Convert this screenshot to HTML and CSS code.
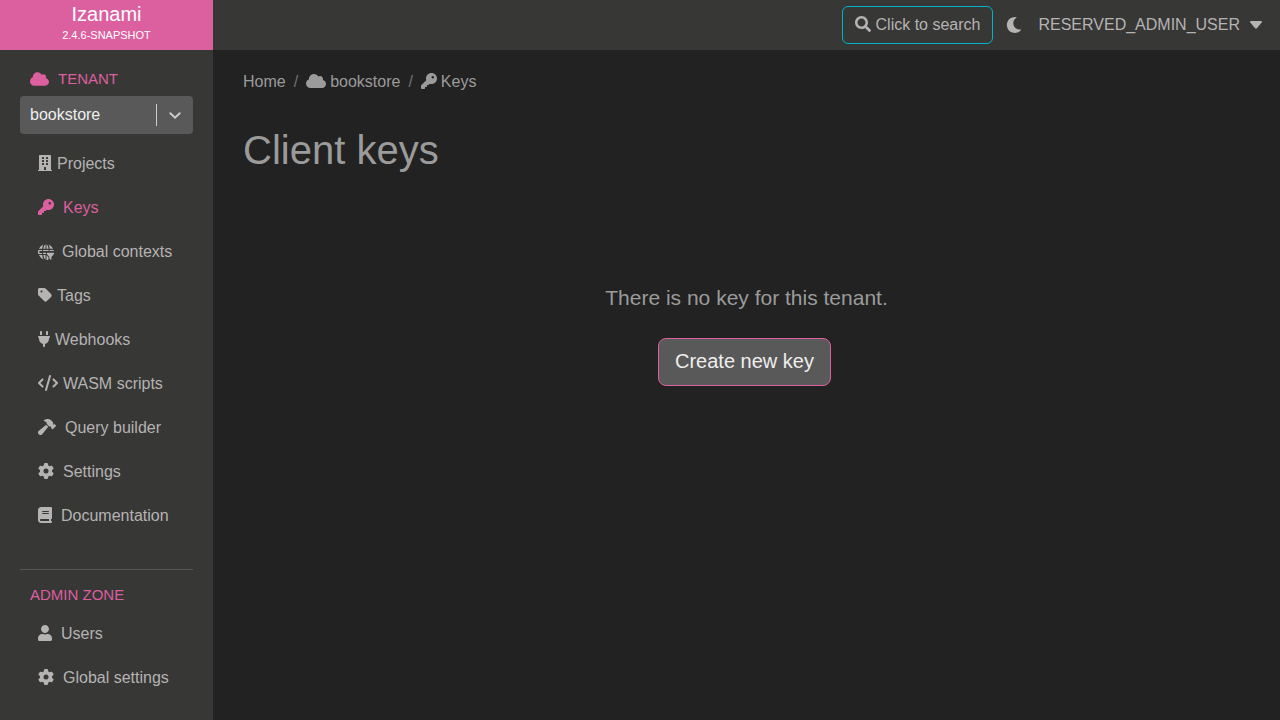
FILE: index.html
```html
<!DOCTYPE html>
<html lang="en">
<head>
<meta charset="utf-8">
<title>Izanami - Client keys</title>
<link rel="stylesheet" href="styles.css">
</head>
<body>
<svg class="sprite" aria-hidden="true">
  <symbol id="cloud" viewBox="0 0 640 512"><path d="M537.6 226.6c4.100-10.700 6.400-22.400 6.400-34.600 0-53-43-96-96-96-19.700 0-38.100 6-53.300 16.200C367 64.200 315.300 32 256 32c-88.400 0-160 71.600-160 160 0 2.700.1 5.400.2 8.100C40.200 219.800 0 273.200 0 336c0 79.500 64.500 144 144 144h368c70.700 0 128-57.300 128-128 0-61.900-44-113.600-102.400-125.400z"/></symbol>
  <symbol id="key" viewBox="0 0 512 512"><path d="M336 352c97.200 0 176-78.800 176-176S433.200 0 336 0S160 78.800 160 176c0 18.700 2.900 36.800 8.300 53.700L7 391c-4.500 4.500-7 10.600-7 17l0 80c0 13.300 10.700 24 24 24l80 0c13.300 0 24-10.700 24-24l0-40 40 0c13.300 0 24-10.700 24-24l0-40 40 0c6.400 0 12.500-2.500 17-7l33.300-33.300c16.900 5.400 35 8.300 53.700 8.300zM376 96a40 40 0 1 1 0 80 40 40 0 1 1 0-80z"/></symbol>
  <symbol id="gear" viewBox="0 0 512 512"><path d="M495.900 166.600c3.200 8.700 .5 18.400-6.400 24.600l-43.300 39.400c1.100 8.300 1.700 16.800 1.700 25.400s-.6 17.100-1.700 25.400l43.300 39.400c6.900 6.200 9.600 15.900 6.400 24.600c-4.400 11.900-9.700 23.300-15.800 34.300l-4.700 8.100c-6.600 11-14 21.400-22.100 31.200c-5.900 7.200-15.700 9.600-24.500 6.800l-55.700-17.700c-13.400 10.300-28.200 18.900-44 25.400l-12.500 57.100c-2 9.100-9 16.300-18.200 17.800c-13.800 2.300-28 3.500-42.500 3.500s-28.700-1.200-42.500-3.500c-9.200-1.500-16.200-8.700-18.200-17.800l-12.500-57.100c-15.800-6.500-30.600-15.100-44-25.400L83.100 425.900c-8.800 2.800-18.600 .3-24.500-6.800c-8.100-9.800-15.500-20.200-22.100-31.200l-4.700-8.100c-6.100-11-11.400-22.400-15.800-34.300c-3.200-8.700-.5-18.400 6.400-24.600l43.300-39.400C64.600 273.100 64 264.600 64 256s.6-17.100 1.700-25.400L22.400 191.200c-6.900-6.200-9.600-15.900-6.400-24.600c4.400-11.900 9.700-23.300 15.800-34.300l4.700-8.100c6.600-11 14-21.400 22.100-31.200c5.900-7.200 15.700-9.600 24.500-6.800l55.700 17.700c13.400-10.300 28.200-18.900 44-25.400l12.500-57.100c2-9.100 9-16.300 18.200-17.800C227.300 1.200 241.500 0 256 0s28.700 1.200 42.500 3.500c9.200 1.500 16.200 8.700 18.200 17.800l12.500 57.100c15.800 6.500 30.600 15.100 44 25.400l55.700-17.700c8.800-2.800 18.600-.3 24.500 6.800c8.100 9.800 15.500 20.200 22.100 31.200l4.700 8.100c6.100 11 11.400 22.400 15.800 34.300zM256 336a80 80 0 1 0 0-160 80 80 0 1 0 0 160z"/></symbol>
</svg>

<div class="app">
  <a class="brand" href="#">
    <span class="brand-name">Izanami</span>
    <span class="brand-version">2.4.6-SNAPSHOT</span>
  </a>

  <header class="topbar">
    <button class="search" type="button">
      <svg class="icon" width="16" height="16" viewBox="0 0 512 512" aria-hidden="true"><path d="M505 442.700L405.300 343c-4.500-4.500-10.600-7-17-7H372c27.600-35.300 44-79.700 44-128C416 93.100 322.900 0 208 0S0 93.100 0 208s93.100 208 208 208c48.300 0 92.700-16.400 128-44v16.300c0 6.400 2.500 12.500 7 17l99.700 99.700c9.400 9.400 24.600 9.400 33.900 0l28.300-28.300c9.400-9.400 9.400-24.600.1-34zM208 336c-70.700 0-128-57.200-128-128 0-70.700 57.200-128 128-128 70.700 0 128 57.200 128 128 0 70.700-57.200 128-128 128z"/></svg>
      Click to search
    </button>
    <button class="theme" type="button" aria-label="Toggle theme">
      <svg class="icon" width="16" height="16" viewBox="0 0 512 512" aria-hidden="true"><path d="M283.200 512c79 0 151.100-35.900 198.900-94.800 7-8.700-.7-21.400-11.600-19.300-124.200 23.600-238.300-71.600-238.300-197 0-72.200 38.700-138.600 101.500-174.400 9.700-5.500 7.300-20.200-3.700-22.200A258 258 0 0 0 283.200 0c-141.300 0-256 114.500-256 256 0 141.300 114.500 256 256 256z"/></svg>
    </button>
    <button class="account" type="button">
      RESERVED_ADMIN_USER
      <svg class="icon" width="12" height="8" viewBox="0 0 12 8" aria-hidden="true"><path d="M1 0h10q1.500.2.700 1.400L6.900 7.300q-.9.900-1.800 0L.3 1.400Q-.5.200 1 0z"/></svg>
    </button>
  </header>

  <aside class="sidebar">
    <label class="section" for="tenant"><svg class="icon" width="19" height="16" aria-hidden="true"><use href="#cloud"/></svg>TENANT</label>
    <div class="select-box">
      <select id="tenant"><option>bookstore</option></select>
      <svg class="select-arrow" width="37" height="38" viewBox="0 0 37 38" aria-hidden="true"><path class="divider" d="M0 8h1v22H0z"/><path class="chevron" d="M14.300 17.200l4.700 4.500 4.700-4.500"/></svg>
    </div>
    <nav class="menu" aria-label="Tenant">
      <a class="tight" href="#"><svg class="icon" width="14" height="16" viewBox="0 0 448 512" aria-hidden="true"><path fill-rule="evenodd" d="M436 480h-20V24c0-13-11-24-24-24H56C43 0 32 11 32 24v456H12c-7 0-12 5-12 12v20h448v-20c0-7-5-12-12-12zM128 76q0-12 12-12h40q12 0 12 12v40q0 12-12 12h-40q-12 0-12-12zM128 172q0-12 12-12h40q12 0 12 12v40q0 12-12 12h-40q-12 0-12-12zM128 268q0-12 12-12h40q12 0 12 12v40q0 12-12 12h-40q-12 0-12-12zM256 76q0-12 12-12h40q12 0 12 12v40q0 12-12 12h-40q-12 0-12-12zM256 172q0-12 12-12h40q12 0 12 12v40q0 12-12 12h-40q-12 0-12-12zM256 268q0-12 12-12h40q12 0 12 12v40q0 12-12 12h-40q-12 0-12-12zM192 396q0-12 12-12h40q12 0 12 12v84h-64z"/></svg>Projects</a>
      <a class="active" href="#" aria-current="page"><svg class="icon" width="16" height="16" aria-hidden="true"><use href="#key"/></svg>Keys</a>
      <a class="globe" href="#"><svg class="icon" width="16" height="16" viewBox="0 0 16 16" aria-hidden="true"><path d="M5.400.6Q2.300 1.800.9 4.800h3.300Q4.500 2.200 5.400.6zM7.500.2Q5.700 1.300 5.300 4.800h2.200zM8.500.2v4.600h2.200Q10.300 1.300 8.500.2zM10.600.6Q11.500 2.200 11.800 4.800h3.300Q13.700 1.800 10.600.6zM.3 6H4v1H1.400v2H4v1H.3Q-.3 8 .3 6zM5 6h5.600v1H5zM11.600 6h4.100v1h-4.100zM5 8.800h3V10H5zM.9 11.100h3.300q.3 2.600 1.200 4.200Q2.300 14.100.9 11.100zM5.300 11.100h2.200v4.700q-1.800-1.200-2.200-4.700zM8.500 11.300l2 1.900v2.200q-.8.500-2 .5zM8.800 8.800H16v1.300l-2.600 2.900v3l-2-1.300V13L8.800 10.100z"/></svg>Global contexts</a>
      <a class="tight" href="#"><svg class="icon" width="14" height="16" viewBox="0 0 448 512" aria-hidden="true"><path d="M0 80v149.500c0 17 6.700 33.300 18.700 45.300l176 176c25 25 65.500 25 90.500 0l133.500-133.500c25-25 25-65.500 0-90.500l-176-176c-12-12-28.300-18.700-45.300-18.700H48C21.500 32 0 53.500 0 80zm112 32a32 32 0 1 1 0 64 32 32 0 1 1 0-64z"/></svg>Tags</a>
      <a class="tight" href="#"><svg class="icon" width="12" height="16" viewBox="0 0 384 512" aria-hidden="true"><path d="M96 0C78.300 0 64 14.300 64 32l0 96 64 0 0-96c0-17.700-14.300-32-32-32zM288 0c-17.700 0-32 14.300-32 32l0 96 64 0 0-96c0-17.700-14.300-32-32-32zM32 160c-17.700 0-32 14.300-32 32s14.300 32 32 32l0 32c0 77.400 55 142 128 156.800l0 67.200c0 17.700 14.300 32 32 32s32-14.300 32-32l0-67.200C297 398 352 333.400 352 256l0-32c17.700 0 32-14.300 32-32s-14.300-32-32-32L32 160z"/></svg>Webhooks</a>
      <a class="tight" href="#"><svg class="icon" width="20" height="16" viewBox="0 0 640 512" aria-hidden="true"><path d="M392.800 1.200c-17-4.900-34.700 5-39.600 22l-128 448c-4.900 17 5 34.700 22 39.600s34.700-5 39.600-22l128-448c4.900-17-5-34.700-22-39.600zm80.600 120.100c-12.500 12.500-12.500 32.800 0 45.300L562.700 256l-89.400 89.400c-12.500 12.500-12.500 32.800 0 45.300s32.800 12.500 45.300 0l112-112c12.500-12.500 12.500-32.800 0-45.300l-112-112c-12.500-12.500-32.800-12.500-45.300 0zm-306.700 0c-12.500-12.500-32.800-12.500-45.300 0l-112 112c-12.500 12.500-12.500 32.800 0 45.300l112 112c12.500 12.500 32.800 12.500 45.300 0s12.500-32.800 0-45.300L77.300 256l89.400-89.400c12.500-12.500 12.500-32.800 0-45.300z"/></svg>WASM scripts</a>
      <a href="#"><svg class="icon" width="18" height="16" viewBox="0 0 576 512" aria-hidden="true"><path d="M413.500 237.500c-28.200 4.800-58.200-3.600-80-25.400l-38.100-38.100C280.400 159 272 138.800 272 117.600l0-12.100L192.300 62c-5.300-2.900-8.600-8.600-8.300-14.700s3.900-11.500 9.500-14l47.200-21C259.100 4.200 279 0 299.200 0l18.100 0c36.700 0 72 14 98.700 39.100l44.600 42c24.200 22.800 33.200 55.700 26.600 86L503 183l8-8c9.400-9.400 24.600-9.400 33.900 0l24 24c9.400 9.400 9.400 24.600 0 33.900l-88 88c-9.400 9.400-24.600 9.400-33.900 0l-24-24c-9.400-9.400-9.400-24.600 0-33.900l8-8-17.500-17.500zM27.400 377.100L260.900 182.600c3.500 4.900 7.500 9.600 11.800 14l38.100 38.100c6 6 12.400 11.200 19.200 15.700L134.900 484.600c-14.500 17.400-36 27.400-58.600 27.400C34.100 512 0 477.800 0 435.700c0-22.600 10.100-44.100 27.400-58.600z"/></svg>Query builder</a>
      <a href="#"><svg class="icon" width="16" height="16" aria-hidden="true"><use href="#gear"/></svg>Settings</a>
      <a href="#"><svg class="icon" width="14" height="16" viewBox="0 0 448 512" aria-hidden="true"><path d="M96 0C43 0 0 43 0 96L0 416c0 53 43 96 96 96l288 0 32 0c17.700 0 32-14.300 32-32s-14.300-32-32-32l0-64c17.700 0 32-14.300 32-32l0-320c0-17.700-14.300-32-32-32L384 0 96 0zm0 384l256 0 0 64L96 448c-17.700 0-32-14.300-32-32s14.300-32 32-32zm32-240c0-8.800 7.200-16 16-16l192 0c8.800 0 16 7.200 16 16s-7.200 16-16 16l-192 0c-8.800 0-16-7.200-16-16zm16 48l192 0c8.800 0 16 7.200 16 16s-7.200 16-16 16l-192 0c-8.800 0-16-7.200-16-16s7.200-16 16-16z"/></svg>Documentation</a>
    </nav>
    <hr>
    <h2 class="section">ADMIN ZONE</h2>
    <nav class="menu" aria-label="Admin zone">
      <a href="#"><svg class="icon" width="14" height="16" viewBox="0 0 448 512" aria-hidden="true"><path d="M224 256c70.700 0 128-57.300 128-128S294.700 0 224 0 96 57.300 96 128s57.300 128 128 128zm89.600 32h-16.700c-22.200 10.200-46.900 16-72.900 16s-50.600-5.800-72.900-16h-16.700C60.200 288 0 348.200 0 422.400V464c0 26.500 21.500 48 48 48h352c26.500 0 48-21.500 48-48v-41.600c0-74.200-60.200-134.400-134.400-134.400z"/></svg>Users</a>
      <a href="#"><svg class="icon" width="16" height="16" aria-hidden="true"><use href="#gear"/></svg>Global settings</a>
    </nav>
  </aside>

  <main class="content">
    <nav aria-label="Breadcrumb">
      <ol class="breadcrumb">
        <li><a href="#">Home</a></li>
        <li><a href="#"><svg class="icon" width="20" height="16" aria-hidden="true"><use href="#cloud"/></svg>bookstore</a></li>
        <li><a href="#" aria-current="page"><svg class="icon" width="16" height="16" aria-hidden="true"><use href="#key"/></svg>Keys</a></li>
      </ol>
    </nav>
    <h1>Client keys</h1>
    <section class="empty">
      <p>There is no key for this tenant.</p>
      <button class="create" type="button">Create new key</button>
    </section>
  </main>
</div>
</body>
</html>
```
FILE: styles.css
```css
* {
  box-sizing: border-box;
}

body {
  margin: 0;
  background: #222;
  color: #9b9b9b;
  font: 16px/24px "Liberation Sans", Arial, sans-serif;
}

a {
  color: inherit;
  text-decoration: none;
}

button,
select {
  font: inherit;
  cursor: pointer;
}

.sprite {
  display: none;
}

.icon {
  flex: none;
  margin-bottom: 2px;
  fill: currentColor;
}

.app {
  display: grid;
  grid-template-columns: 213px 1fr;
  grid-template-rows: 50px 1fr;
  min-height: 100vh;
}

.brand {
  display: flex;
  flex-direction: column;
  align-items: center;
  background: #dc5f9f;
  color: #fff;
}

.brand-name {
  font-size: 20px;
  line-height: 28px;
}

.brand-version {
  font-size: 11px;
  line-height: 14px;
}

.topbar {
  display: flex;
  align-items: center;
  justify-content: flex-end;
  padding: 0 18px;
  background: #373735;
}

.topbar button {
  display: flex;
  align-items: center;
  background: none;
  border: 0;
  color: #b5b3b3;
}

.topbar .search {
  gap: 5px;
  height: 38px;
  padding: 0 12px;
  border: 1px solid #00b4cd;
  border-radius: 6px;
}

.topbar .theme {
  margin-left: 13px;
  padding: 0;
}

.theme .icon {
  margin: 0;
}

.topbar .account {
  gap: 10px;
  margin-left: 16px;
  padding: 0;
}

.account .icon {
  margin: 0;
}

.sidebar {
  padding: 17px 20px 16px;
  background: #373735;
  color: #b5b3b3;
}

.section {
  display: flex;
  align-items: center;
  gap: 9px;
  margin: 0;
  padding-left: 10px;
  color: #dc5f9f;
  font-size: 15px;
  font-weight: 400;
}

.section .icon {
  margin: 0;
}

.select-box {
  position: relative;
  margin: 5px 0 8px;
}

.select-box select {
  display: block;
  width: 100%;
  height: 38px;
  padding: 0 40px 0 10px;
  appearance: none;
  background: #595959;
  border: 0;
  border-radius: 4px;
  color: #eee;
}

.select-arrow {
  position: absolute;
  top: 0;
  right: 0;
  pointer-events: none;
}

.divider {
  fill: #ccc;
}

.chevron {
  fill: none;
  stroke: #ccc;
  stroke-width: 2;
  stroke-linecap: round;
}

.menu a {
  display: flex;
  align-items: center;
  gap: 9px;
  padding: 10px 0 10px 18px;
}

.menu .tight {
  gap: 5px;
}

.menu .globe {
  gap: 8px;
}

.globe .icon {
  margin: 0;
}

.menu .active {
  color: #dc5f9f;
}

.sidebar hr {
  height: 1px;
  margin: 31px 0 13px;
  border: 0;
  background: #565654;
}

.sidebar h2 {
  margin-bottom: 5px;
}

.content {
  padding: 20px 30px;
}

.breadcrumb {
  display: flex;
  margin: 0;
  padding: 0;
  list-style: none;
}

.breadcrumb li,
.breadcrumb a {
  display: flex;
  align-items: center;
}

.breadcrumb a {
  gap: 4px;
}

.breadcrumb li + li::before {
  content: "/";
  padding: 0 8px;
  color: #6c757d;
}

h1 {
  margin: 32px 0 0;
  font-size: 40px;
  font-weight: 400;
  line-height: 48px;
}

.empty {
  display: flex;
  flex-direction: column;
  align-items: center;
  padding-top: 108px;
}

.empty p {
  margin: 0 0 24px;
  font-size: 21px;
  line-height: 32px;
}

.create {
  height: 48px;
  margin-right: 4px;
  padding: 0 16px 2px;
  background: #595959;
  border: 1px solid #dc5f9f;
  border-radius: 8px;
  color: #eee;
  font-size: 20px;
}
```
